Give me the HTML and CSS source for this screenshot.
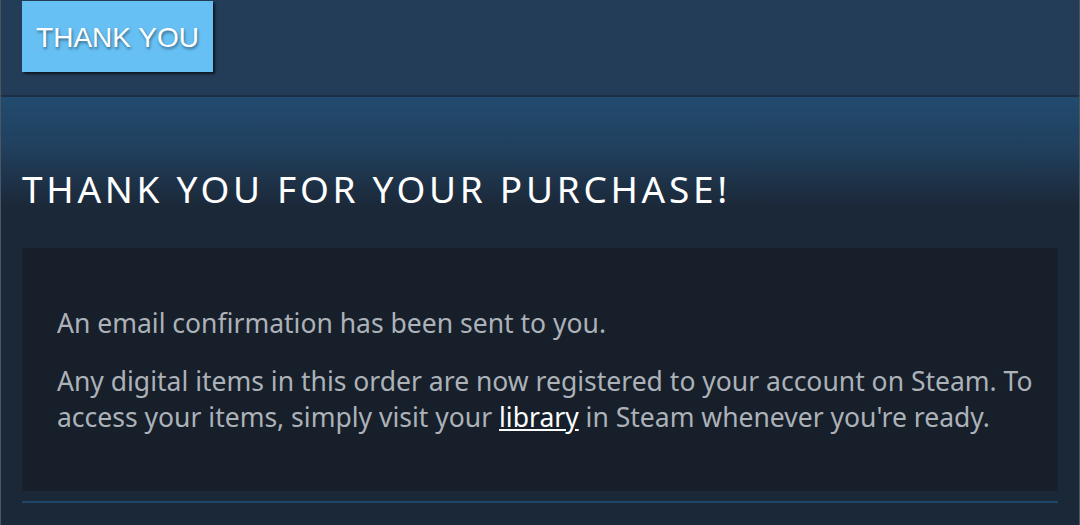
FILE: index.html
```html
<!DOCTYPE html>
<html lang="en">
<head>
    <meta charset="UTF-8">
    <meta name="viewport" content="width=device-width, initial-scale=1.0">
    <title>Thank You</title>
    <link rel="stylesheet" href="styles.css">
</head>
<body>
    <div class="page">
        <div class="topbar">
            <div class="tab">THANK YOU</div>
        </div>
        <div class="hero">
            <h1>THANK YOU FOR YOUR PURCHASE!</h1>
        </div>
        <div class="receipt">
            <p class="first">An email confirmation has been sent to you.</p>
            <p>Any digital items in this order are now registered to your account on Steam. To access your items, simply visit your <a href="#">library</a> in Steam whenever you're ready.</p>
        </div>
        <div class="divider"></div>
    </div>
</body>
</html>
```

FILE: styles.css
```css
* {
    margin: 0;
    padding: 0;
    box-sizing: border-box;
}

body {
    background: #1b2838;
    font-family: 'Noto Sans', 'Open Sans', sans-serif;
    height: 100vh;
    overflow: hidden;
}

.page {
    height: 100%;
    border-left: 1px solid #4b5664;
    border-right: 1px solid #4b5664;
}

.topbar {
    height: 97px;
    background: #233c57;
    border-bottom: 2px solid #1c2e44;
    padding: 1px 0 0 21px;
}

.tab {
    display: inline-block;
    width: 191px;
    height: 71px;
    background: #66c0f4;
    color: #ffffff;
    font-family: 'Liberation Sans', Arial, sans-serif;
    font-size: 28px;
    line-height: 73px;
    text-align: center;
    text-shadow: 1px 2px 3px rgba(0, 0, 0, 0.45);
    box-shadow: 2px 2px 2px rgba(0, 0, 0, 0.6);
}

.hero {
    height: 151px;
    background: linear-gradient(to bottom, #214b6f 0px, #21405e 50px, #1b2838 110px);
    padding: 70px 21px 0;
}

h1 {
    color: #ffffff;
    font-weight: 400;
    font-size: 37px;
    letter-spacing: 3.7px;
    line-height: 44px;
}

.receipt {
    margin: 0 21px;
    background: #171f2b;
    padding: 57px 8px 56px 35px;
    color: #acb2b8;
    font-size: 26.5px;
    line-height: 36px;
}

.receipt .first {
    margin-bottom: 22px;
}

.receipt a {
    color: #ffffff;
}

.divider {
    margin: 10px 21px 0;
    height: 2px;
    background: #1d4766;
}
```
